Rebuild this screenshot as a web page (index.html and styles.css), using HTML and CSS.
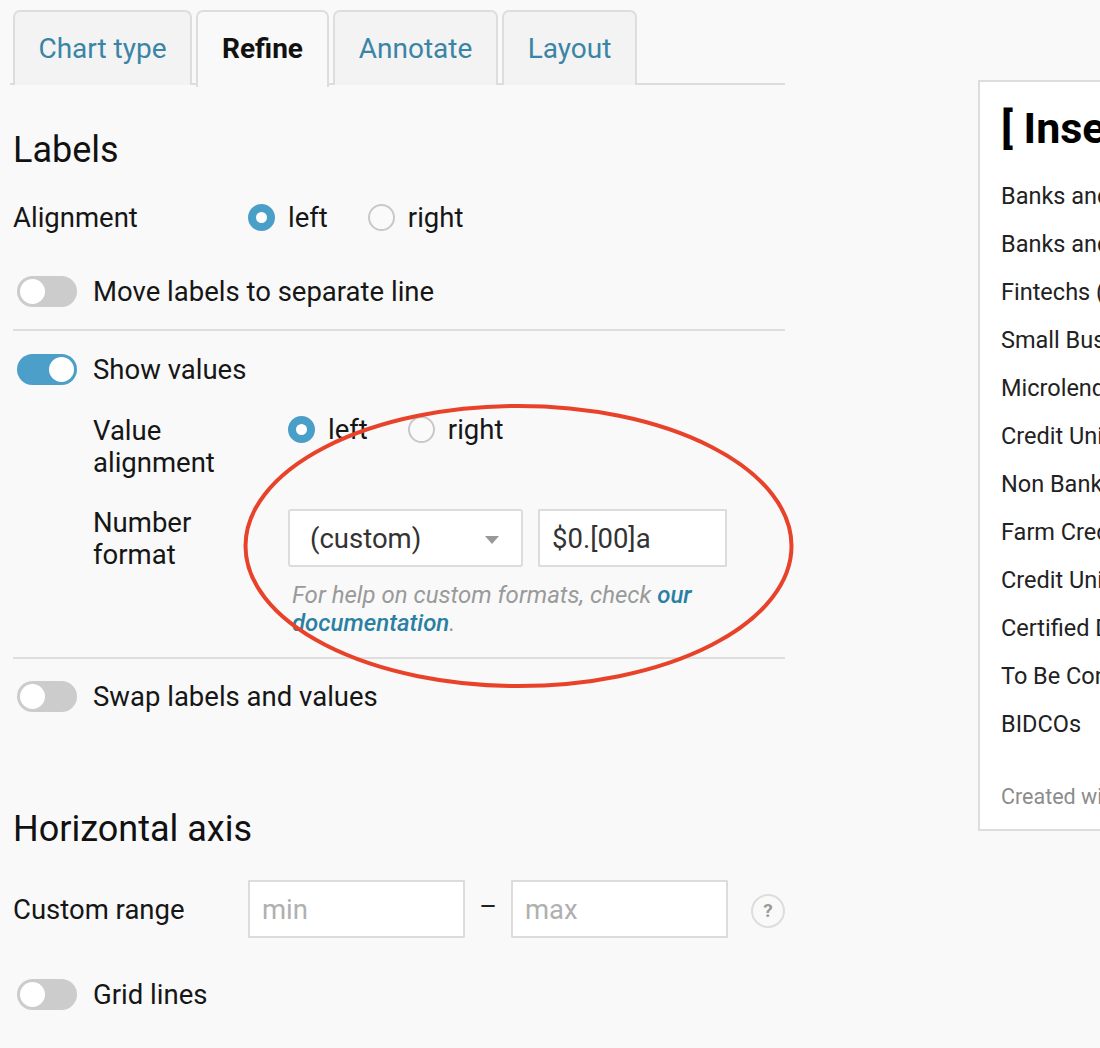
FILE: index.html
```html
<!DOCTYPE html>
<html>
<head>
<meta charset="utf-8">
<link rel="stylesheet" href="styles.css">
</head>
<body>
<div class="page">
  <div class="sidebar">
    <nav class="tabs">
      <a class="tab">Chart type</a>
      <a class="tab active">Refine</a>
      <a class="tab">Annotate</a>
      <a class="tab">Layout</a>
    </nav>
    <div class="content">
      <h2 class="section-title labels-title">Labels</h2>

      <div class="row align-row">
        <div class="row-label">Alignment</div>
        <div class="radios">
          <label class="radio-opt"><span class="radio checked"></span>left</label>
          <label class="radio-opt"><span class="radio"></span>right</label>
        </div>
      </div>

      <div class="row toggle-row move-row">
        <span class="toggle"><span class="knob"></span></span>
        <span class="toggle-text">Move labels to separate line</span>
      </div>

      <div class="sep sep-1"></div>

      <div class="row toggle-row show-row">
        <span class="toggle on"><span class="knob"></span></span>
        <span class="toggle-text">Show values</span>
      </div>

      <div class="sub">
        <div class="sub-row value-align">
          <div class="sub-label">Value<br>alignment</div>
          <div class="radios small">
            <label class="radio-opt"><span class="radio checked"></span>left</label>
            <label class="radio-opt"><span class="radio"></span>right</label>
          </div>
        </div>
        <div class="sub-row number-format">
          <div class="sub-label">Number<br>format</div>
          <div class="format-ctrl">
            <div class="format-inputs">
              <div class="select">(custom)<span class="caret"></span></div>
              <div class="textbox">$0.[00]a</div>
            </div>
            <p class="help">For help on custom formats, check <a class="help-link">our documentation</a>.</p>
          </div>
        </div>
      </div>

      <div class="sep sep-2"></div>

      <div class="row toggle-row swap-row">
        <span class="toggle"><span class="knob"></span></span>
        <span class="toggle-text">Swap labels and values</span>
      </div>

      <h2 class="section-title axis-title">Horizontal axis</h2>

      <div class="row range-row">
        <div class="row-label range-label">Custom range</div>
        <div class="textbox placeholder range-box">min</div>
        <span class="dash">–</span>
        <div class="textbox placeholder range-box">max</div>
        <span class="help-icon">?</span>
      </div>

      <div class="row toggle-row grid-row">
        <span class="toggle"><span class="knob"></span></span>
        <span class="toggle-text">Grid lines</span>
      </div>
    </div>
  </div>

  <div class="preview">
    <h1 class="preview-title">[ Insert title here ]</h1>
    <ul class="preview-list">
      <li>Banks and Thrifts</li>
      <li>Banks and Thrifts (SBA)</li>
      <li>Fintechs (Online Lenders)</li>
      <li>Small Business Lending Companies</li>
      <li>Microlenders</li>
      <li>Credit Unions</li>
      <li>Non Bank Lenders</li>
      <li>Farm Credit Lenders</li>
      <li>Credit Unions (SBA)</li>
      <li>Certified Development Companies</li>
      <li>To Be Confirmed</li>
      <li>BIDCOs</li>
    </ul>
    <div class="credit">Created with Datawrapper</div>
  </div>

  <svg class="annotation" width="1100" height="1048" viewBox="0 0 1100 1048">
    <ellipse cx="518.5" cy="546" rx="273" ry="140" fill="none" stroke="#e8432a" stroke-width="4"/>
  </svg>
</div>
</body>
</html>
```

FILE: styles.css
```css
* { box-sizing: border-box; }

html, body {
  margin: 0;
  padding: 0;
  background: #f9f9f9;
  overflow: hidden;
}

body {
  font-family: Roboto, "Liberation Sans", sans-serif;
  color: #161616;
  width: 1100px;
  height: 1048px;
}

.page {
  position: relative;
  display: flex;
  align-items: flex-start;
  width: 1100px;
  height: 1048px;
}

.sidebar {
  width: 775px;
  margin-left: 10px;
  flex: none;
}

/* Tabs */
.tabs {
  display: flex;
  gap: 4px;
  margin-top: 10px;
  height: 75px;
  padding-left: 3px;
  border-bottom: 2px solid #dddddd;
}

.tab {
  display: flex;
  align-items: center;
  justify-content: center;
  height: 75px;
  padding: 0 20px 0;
  border: 2px solid #dddddd;
  border-bottom: none;
  border-radius: 7px 7px 0 0;
  background: #f3f3f3;
  color: #3a84a6;
  font-size: 28px;
  white-space: nowrap;
}

.tab:nth-child(1) { width: 179px; }
.tab:nth-child(2) { width: 133px; }
.tab:nth-child(3) { width: 165px; }
.tab:nth-child(4) { width: 135px; }

.tab.active {
  background: #f9f9f9;
  color: #111;
  font-weight: 700;
  height: 77px;
  margin-bottom: -2px;
  padding-bottom: 2px;
}

.content {
  padding-left: 3px;
}

.section-title {
  margin: 0;
  font-size: 36px;
  font-weight: 400;
  line-height: 43px;
  color: #111;
}

.labels-title { margin-top: 44px; }
.axis-title { margin-top: 90px; }

.row {
  display: flex;
  align-items: center;
  height: 44px;
  font-size: 27.5px;
}

.row-label {
  width: 235px;
  flex: none;
}

.align-row { margin-top: 23px; }

.radios {
  display: flex;
  align-items: center;
}

.radio-opt {
  display: flex;
  align-items: center;
  margin-right: 40px;
  font-size: 27.5px;
}

.radio {
  width: 27px;
  height: 27px;
  border-radius: 50%;
  border: 2px solid #c8c8c8;
  background: #fafafa;
  margin-right: 13px;
  flex: none;
}

.radio.checked {
  border: 8.5px solid #4a9fc8;
  background: #fff;
}

.toggle-row { padding-left: 4px; }
.move-row { margin-top: 30px; }
.show-row { margin-top: 16px; }
.swap-row { margin-top: 15px; }
.grid-row { margin-top: 34px; }

.toggle {
  position: relative;
  display: block;
  width: 60px;
  height: 31px;
  border-radius: 16px;
  background: #cccccc;
  flex: none;
  margin-right: 16px;
}

.toggle .knob {
  position: absolute;
  left: 3px;
  top: 3px;
  width: 25px;
  height: 25px;
  border-radius: 50%;
  background: #fff;
}

.toggle.on { background: #4b9fc9; }
.toggle.on .knob { left: 32px; }

.sep {
  height: 2px;
  background: #dedede;
}

.sep-1 { margin-top: 16px; }
.sep-2 { margin-top: 20px; }

/* Sub-options */
.sub {
  padding-left: 80px;
}

.sub-row {
  display: flex;
  align-items: flex-start;
  font-size: 27.5px;
}

.sub-label {
  width: 195px;
  flex: none;
  line-height: 32px;
}

.value-align { margin-top: 24px; }
.value-align .radios { height: 28px; }

.number-format { margin-top: 28px; }

.format-ctrl { padding-top: 2px; }

.format-inputs {
  display: flex;
  gap: 15px;
}

.select, .textbox {
  height: 58px;
  border: 2px solid #dcdcdc;
  border-radius: 3px;
  background: #fff;
  display: flex;
  align-items: center;
  font-size: 27.5px;
  color: #333;
}

.select {
  position: relative;
  width: 235px;
  padding-left: 20px;
}

.caret {
  position: absolute;
  right: 22px;
  top: 25px;
  width: 0;
  height: 0;
  border-left: 7px solid transparent;
  border-right: 7px solid transparent;
  border-top: 8px solid #999;
}

.textbox {
  width: 189px;
  padding-left: 12px;
  border-radius: 1px;
}

.help {
  margin: 14px 0 0 4px;
  font-size: 24px;
  line-height: 28px;
  font-style: italic;
  color: #9a9a9a;
  width: 440px;
}

.help-link {
  color: #2b7fa3;
  font-weight: 500;
}

/* Range */
.range-row {
  margin-top: 29px;
  height: 58px;
}

.range-box {
  width: 217px;
  color: #b0b0b0;
}

.dash {
  width: 46px;
  text-align: center;
  font-size: 27px;
  color: #222;
  padding-bottom: 4px;
}

.help-icon {
  width: 34px;
  height: 34px;
  margin-left: 23px;
  margin-top: 3px;
  border-radius: 50%;
  border: 2px solid #dddddd;
  display: flex;
  align-items: center;
  justify-content: center;
  font-size: 19px;
  font-weight: 700;
  color: #999;
}

/* Preview */
.preview {
  flex: none;
  width: 420px;
  height: 751px;
  margin-top: 80px;
  margin-left: 193px;
  background: #fff;
  border: 2px solid #dddddd;
  padding: 20px 0 0 21px;
  white-space: nowrap;
  overflow: hidden;
}

.preview-title {
  margin: 0;
  font-size: 43px;
  font-weight: 700;
  line-height: 52px;
  color: #000;
}

.preview-list {
  list-style: none;
  margin: 18px 0 0;
  padding: 0;
}

.preview-list li {
  font-size: 23.5px;
  line-height: 48px;
  height: 48px;
  color: #222;
}

.credit {
  margin-top: 36px;
  font-size: 21.5px;
  color: #8c8c8c;
}

.annotation {
  position: absolute;
  left: 0;
  top: 0;
  pointer-events: none;
}
```
